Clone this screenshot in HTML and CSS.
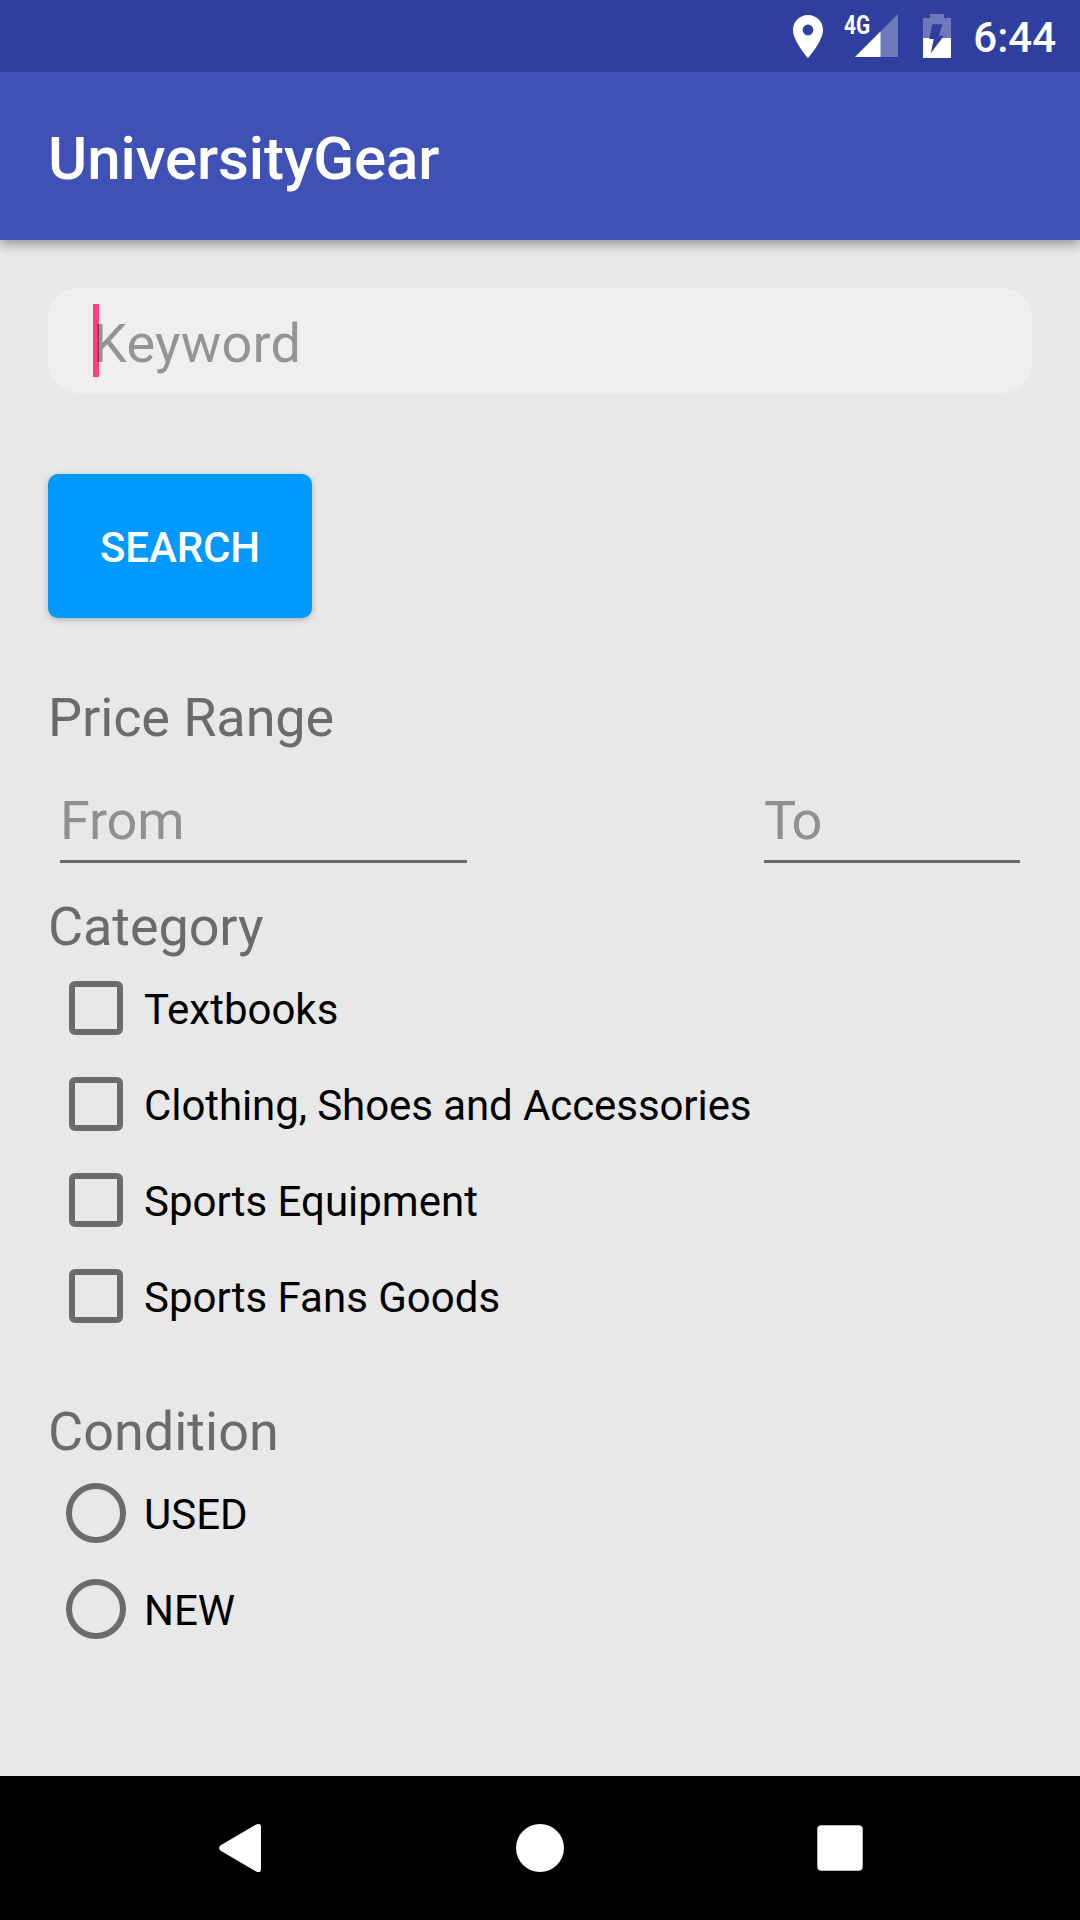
FILE: index.html
```html
<!DOCTYPE html>
<html lang="en">
<head>
<meta charset="utf-8">
<title>UniversityGear</title>
<link rel="stylesheet" href="styles.css">
</head>
<body>
<div class="screen">
  <div class="status-bar">
    <svg class="icon-location" width="30" height="43" viewBox="0 0 30 43"><path fill="#fff" fill-rule="evenodd" d="M15 0C6.700 0 0 6.600 0 15c0 11.200 15 28 15 28s15-16.800 15-28C30 6.600 23.300 0 15 0zm0 20.400a5.400 5.400 0 1 1 0-10.800 5.400 5.400 0 0 1 0 10.800z"/></svg>
    <div class="signal">
      <svg width="43" height="43" viewBox="0 0 43 43"><path fill="#fff" fill-opacity=".3" d="M0 43L43 0v43z"/><path fill="#fff" d="M0 43L25.500 17.500V43z"/></svg>
      <span class="network">4G</span>
    </div>
    <svg class="icon-battery" width="28" height="44" viewBox="0 0 28 44"><path fill="#7078ba" d="M7 0h14v4h7v20H0V4h7z"/><path fill="#fff" d="M0 24h28v20H0z"/><path fill="#303f9f" d="M9.300 10.300h10L16 21.700h5L7.700 39.300l3-14.300H6.300z"/></svg>
    <span class="clock">6:44</span>
  </div>
  <header class="app-bar"><h1 class="app-title">UniversityGear</h1></header>
  <main class="content">
    <div class="keyword"><span class="keyword-hint">Keyword</span><span class="caret"></span></div>
    <div class="button-wrap"><button class="search">SEARCH</button></div>
    <h2 class="heading">Price Range</h2>
    <div class="price-row">
      <div class="price-field from">From</div>
      <div class="price-field to">To</div>
    </div>
    <h2 class="heading category">Category</h2>
    <div class="options">
      <label class="option"><span class="checkbox"></span><span class="option-text">Textbooks</span></label>
      <label class="option"><span class="checkbox"></span><span class="option-text option-long">Clothing, Shoes and Accessories</span></label>
      <label class="option"><span class="checkbox"></span><span class="option-text">Sports Equipment</span></label>
      <label class="option"><span class="checkbox"></span><span class="option-text">Sports Fans Goods</span></label>
    </div>
    <h2 class="heading condition">Condition</h2>
    <div class="options">
      <label class="option"><span class="radio"></span><span class="option-text">USED</span></label>
      <label class="option"><span class="radio"></span><span class="option-text">NEW</span></label>
    </div>
  </main>
  <nav class="nav-bar">
    <svg class="nav-icon" viewBox="0 0 60 60"><path fill="#fff" d="M10.300 27.600L46 6.500Q51 4.500 51 9v42q0 4.500-5 2.500L10.300 32.400Q8 30 10.300 27.600z"/></svg>
    <svg class="nav-icon" viewBox="0 0 60 60"><circle cx="30" cy="30" r="24" fill="#fff"/></svg>
    <svg class="nav-icon" viewBox="0 0 60 60"><rect x="7.300" y="7.300" width="45.400" height="45.400" rx="4" fill="#fff"/></svg>
  </nav>
</div>
</body>
</html>
```
FILE: styles.css
```css
* { box-sizing: border-box; }
body { margin: 0; }
.screen {
  display: flex;
  flex-direction: column;
  width: 1080px;
  height: 1920px;
  overflow: hidden;
  background: #e8e8e8;
  font-family: Roboto, sans-serif;
}
.status-bar {
  position: relative;
  z-index: 1;
  display: flex;
  justify-content: flex-end;
  flex: 0 0 72px;
  padding: 14px 24px 0 0;
  background: #303f9f;
  color: #fff;
}
.icon-location { margin: 1px 32px 0 0; }
.signal { position: relative; height: 43px; margin-right: 25px; }
.signal svg { display: block; }
.network {
  position: absolute;
  left: -11px;
  top: -3px;
  font: 700 26px/28px Roboto, sans-serif;
  transform: scaleX(.8);
  transform-origin: 0 0;
}
.icon-battery { margin-right: 22px; }
.clock { font-size: 42px; font-weight: 500; line-height: 48px; }
.app-bar {
  display: flex;
  align-items: center;
  flex: 0 0 168px;
  padding: 6px 48px 0;
  background: #3f51b5;
  box-shadow: 0 5px 10px rgba(0, 0, 0, .33);
}
.app-title { margin: 0; color: #fff; font-size: 60px; font-weight: 500; line-height: 72px; letter-spacing: -.1px; }
.content { flex: 1; padding: 48px 48px 0; }
.keyword {
  position: relative;
  height: 105px;
  padding: 16px 45px;
  border-radius: 30px;
  background: #efefef;
  font-size: 54px;
  line-height: 80px;
  letter-spacing: .2px;
}
.caret { position: absolute; left: 45px; top: 16px; width: 6px; height: 73px; background: #ff4081; }
.keyword-hint { position: relative; z-index: 1; color: rgba(0, 0, 0, .38); }
.button-wrap { margin-top: 81px; }
.search {
  display: block;
  width: 264px;
  height: 144px;
  padding: 3px 0 0;
  border: 0;
  border-radius: 10px;
  background: #09f;
  box-shadow: 0 2px 6px rgba(0, 0, 0, .24);
  color: #fff;
  font: 500 42px/48px Roboto, sans-serif;
  letter-spacing: -.1px;
}
.heading { margin: 64px 0 0; color: #6b6b6b; font-size: 54px; font-weight: 400; line-height: 72px; letter-spacing: -.1px; }
.price-row { display: flex; justify-content: space-between; margin: 31px 12px 0; }
.price-field { height: 78px; border-bottom: 3px solid #6b6b6b; color: #909090; font-size: 54px; line-height: 72px; }
.from { width: 407px; letter-spacing: -.2px; }
.to { width: 256px; letter-spacing: -2px; }
.category { margin-top: 28px; }
.options { display: flex; flex-direction: column; margin-top: -3px; }
.option { display: flex; align-items: center; height: 96px; padding-left: 18px; color: #000; font-size: 42px; line-height: 48px; }
.option-text { padding-top: 4px; }
.option-long { letter-spacing: -.08px; }
.checkbox { width: 54px; height: 54px; margin: 0 21px 0 3px; border: 6px solid #6b6b6b; border-radius: 6px; }
.radio { width: 60px; height: 60px; margin-right: 18px; border: 6px solid #6b6b6b; border-radius: 50%; }
.condition { margin-top: 52px; letter-spacing: 0; }
.nav-bar {
  display: flex;
  justify-content: center;
  align-items: center;
  gap: 240px;
  flex: 0 0 144px;
  background: #000;
}
.nav-icon { width: 60px; height: 60px; }
```
